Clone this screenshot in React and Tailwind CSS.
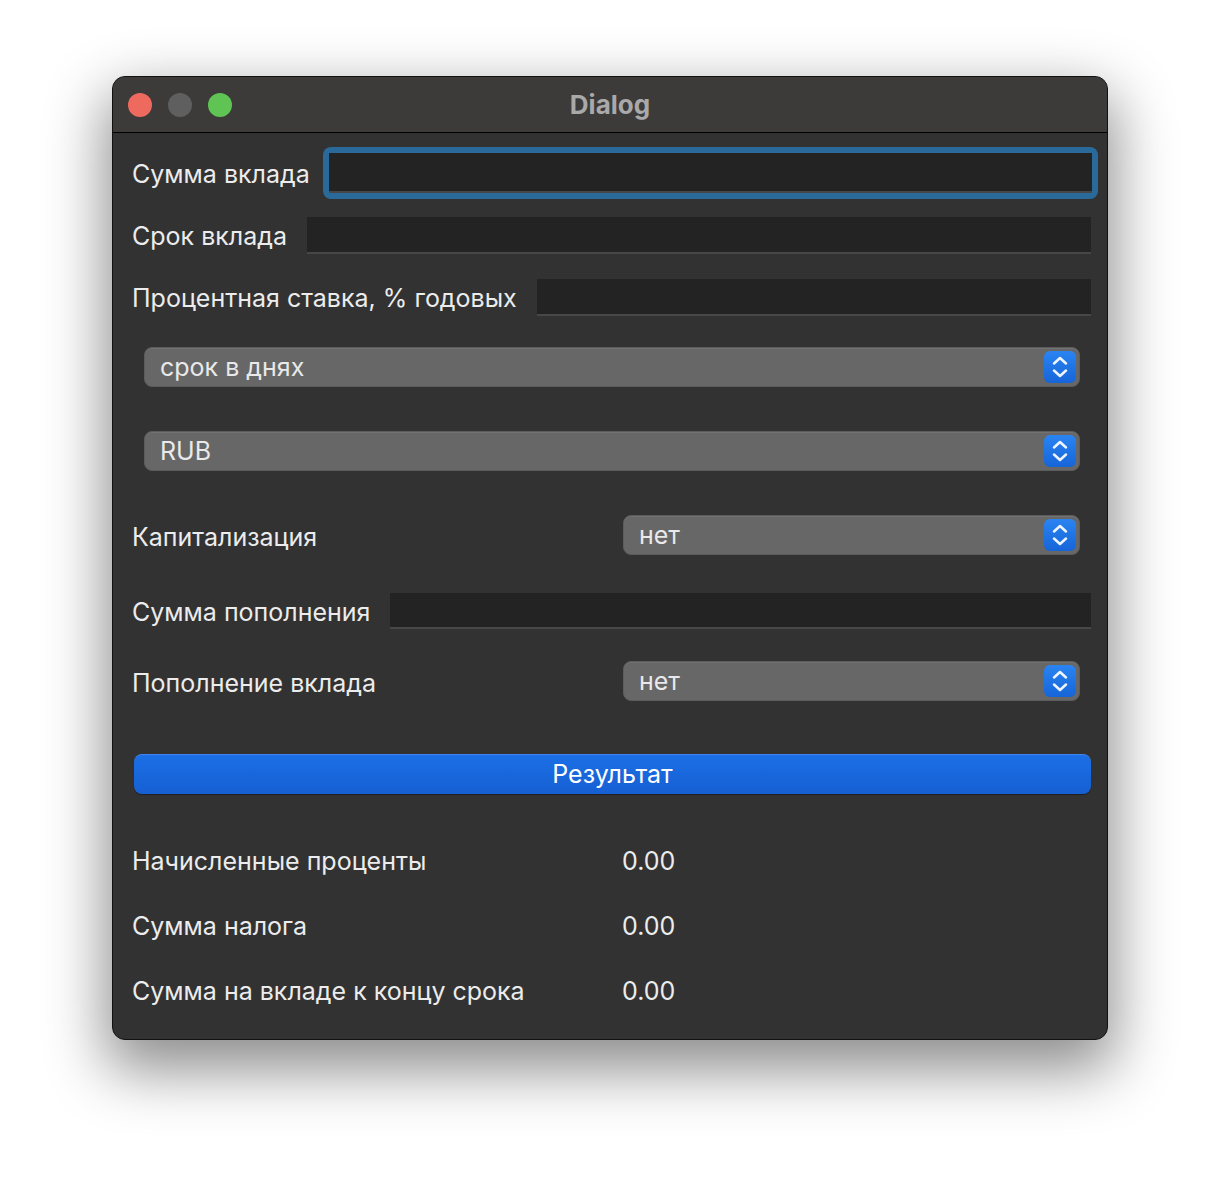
const font = { fontFamily: "Inter, 'Noto Sans', sans-serif" };

function Chevrons() {
  return (
    <svg width="32" height="32" viewBox="0 0 32 32" fill="none">
      <path d="M10 12.5 L16 7 L22 12.5" stroke="#eef4ff" strokeWidth="2.5" strokeLinecap="round" strokeLinejoin="round" />
      <path d="M10 19.5 L16 25 L22 19.5" stroke="#eef4ff" strokeWidth="2.5" strokeLinecap="round" strokeLinejoin="round" />
    </svg>
  );
}

function Combo({ value, className = "" }) {
  return (
    <div className={`flex h-[40px] items-center justify-between rounded-[8px] border border-[#5c5c5c] bg-[#676767] pl-[15px] pr-[3px] shadow-[inset_0_1px_0_rgba(255,255,255,0.08)] ${className}`}>
      <span className="pt-[2px] text-[25px] text-[#e9e9e9]">{value}</span>
      <div className="flex h-[32px] w-[32px] items-center justify-center rounded-[6px] bg-gradient-to-b from-[#2a84f2] to-[#1665d8]">
        <Chevrons />
      </div>
    </div>
  );
}

function Field({ className = "" }) {
  return <div className={`min-w-0 flex-1 border-b-2 border-[#474747] bg-[#232323] ${className}`} />;
}

const labels = [
  ["Начисленные проценты", "0.00"],
  ["Сумма налога", "0.00"],
  ["Сумма на вкладе к концу срока", "0.00"],
];

export default function App() {
  return (
    <div className="min-h-screen bg-white pl-[112px] pt-[76px]" style={font}>
      <div className="flex h-[964px] w-[996px] flex-col overflow-hidden rounded-[13px] border border-[#111] bg-[#323232] shadow-[0_24px_60px_6px_rgba(0,0,0,0.45)]">
        <div className="relative flex h-[56px] shrink-0 items-center border-b border-black bg-[#3c3b3a] pl-[15px]">
          <div className="flex gap-[16px]">
            <span className="h-[24px] w-[24px] rounded-full bg-[#ee6a5f]" />
            <span className="h-[24px] w-[24px] rounded-full bg-[#5f5f5f]" />
            <span className="h-[24px] w-[24px] rounded-full bg-[#5fc454]" />
          </div>
          <div className="absolute inset-0 flex items-center justify-center text-[26px] font-bold text-[#a9a9a9]">
            Dialog
          </div>
        </div>

        <div className="flex flex-col pl-[19px] pr-[16px] text-[25px] text-[#ececec]">
          <div className="mt-[21px] flex h-[38px] items-center gap-[20px]">
            <span className="shrink-0 pt-[3px]">Сумма вклада</span>
            <div className="-mx-[7px] -my-[7px] flex-1 rounded-[8px] bg-[#2a6a9a] p-[6px]">
              <div className="h-[40px] border-b-2 border-[#474747] bg-[#232323]" />
            </div>
          </div>

          <div className="mt-[25px] flex h-[37px] items-center gap-[20px]">
            <span className="shrink-0 pt-[2px]">Срок вклада</span>
            <Field className="h-[37px]" />
          </div>

          <div className="mt-[25px] flex h-[37px] items-center gap-[20px]">
            <span className="shrink-0 pt-[2px]">Процентная ставка, % годовых</span>
            <Field className="h-[37px]" />
          </div>

          <Combo value="срок в днях" className="ml-[12px] mr-[11px] mt-[31px]" />
          <Combo value="RUB" className="ml-[12px] mr-[11px] mt-[44px]" />

          <div className="mt-[44px] flex h-[40px] items-center justify-between">
            <span className="pt-[5px]">Капитализация</span>
            <Combo value="нет" className="mr-[11px] w-[457px]" />
          </div>

          <div className="mt-[38px] flex h-[36px] items-center gap-[20px]">
            <span className="shrink-0 pt-[4px]">Сумма пополнения</span>
            <Field className="h-[36px]" />
          </div>

          <div className="mt-[32px] flex h-[40px] items-center justify-between">
            <span className="pt-[5px]">Пополнение вклада</span>
            <Combo value="нет" className="mr-[11px] w-[457px]" />
          </div>

          <button
            type="button"
            className="ml-[2px] mt-[53px] h-[40px] rounded-[8px] border-t border-[#3f86ee] bg-gradient-to-b from-[#1c6fe6] to-[#165fd3] text-[25px] text-white shadow-[0_1px_1px_rgba(0,0,0,0.4)]"
          >
            Результат
          </button>

          <div className="mt-[52px] flex flex-col gap-[35px]">
            {labels.map(([label, value]) => (
              <div key={label} className="flex h-[30px] items-center pt-[2px]">
                <span className="w-[490px] shrink-0">{label}</span>
                <span>{value}</span>
              </div>
            ))}
          </div>
        </div>
      </div>
    </div>
  );
}
